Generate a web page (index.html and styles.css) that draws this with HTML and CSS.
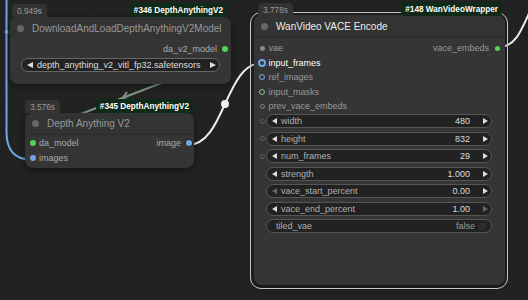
FILE: index.html
```html
<!DOCTYPE html>
<html lang="en">
<head>
  <meta charset="UTF-8">
  <title>Depth Anything / WanVideo VACE</title>
  <link rel="stylesheet" href="styles.css">
</head>
<body>
<div class="canvas">

  <!-- Links (drawn behind nodes) -->
  <svg class="links" width="528" height="300" viewBox="0 0 528 300">
    <path d="M6.5,0 L6.5,132 C6.5,150 14,159.5 31,159.5" class="link link-blue"/>
    <circle cx="6.5" cy="32" r="2" fill="#6fa7e6"/>
    <line x1="190" y1="72" x2="60" y2="122" class="link link-model"/>
    <polyline points="129.2,100.3 122.2,98.6 126.6,92.7" class="link link-model"/>
    <path d="M188,145 C225,145 225,63 262,63" class="link link-white"/>
    <circle cx="225" cy="104" r="4" fill="#eee"/>
    <path d="M499,47 C517,47 522,28 535,0" class="link link-white"/>
  </svg>

  <!-- #346 -->
  <div class="node node-load">
    <div class="badges">
      <span class="badge badge-time">0.949s</span>
      <span class="badge badge-id">#346 DepthAnythingV2</span>
    </div>
    <div class="node-title"><span class="title-dot"></span>DownloadAndLoadDepthAnythingV2Model</div>
    <div class="slot-row">
      <span></span>
      <span class="slot out">da_v2_model<i class="dot green"></i></span>
    </div>
    <div class="combo">
      <i class="arr-l"></i>
      <span class="combo-text">depth_anything_v2_vitl_fp32.safetensors</span>
      <i class="arr-r"></i>
    </div>
  </div>

  <!-- #345 -->
  <div class="node node-depth">
    <div class="badges">
      <span class="badge badge-time">3.576s</span>
      <span class="badge badge-id">#345 DepthAnythingV2</span>
    </div>
    <div class="node-title sep"><span class="title-dot"></span>Depth Anything V2</div>
    <div class="slot-row">
      <span class="slot in"><i class="dot green"></i>da_model</span>
      <span class="slot out">image<i class="dot blue"></i></span>
    </div>
    <div class="slot-row">
      <span class="slot in"><i class="dot blue"></i>images</span>
    </div>
  </div>

  <!-- #148 -->
  <div class="node node-vace">
    <div class="sel-outline"></div>
    <div class="badges">
      <span class="badge badge-time">3.778s</span>
      <span class="badge badge-id">#148 WanVideoWrapper</span>
    </div>
    <div class="node-title sep"><span class="title-dot"></span>WanVideo VACE Encode</div>
    <div class="slots">
      <div class="slot-row">
        <span class="slot in"><i class="dot grey"></i>vae</span>
        <span class="slot out">vace_embeds<i class="dot green small"></i></span>
      </div>
      <div class="slot-row">
        <span class="slot in active"><i class="dot ring big blue"></i>input_frames</span>
      </div>
      <div class="slot-row">
        <span class="slot in"><i class="dot ring blue"></i>ref_images</span>
      </div>
      <div class="slot-row">
        <span class="slot in"><i class="dot ring green"></i>input_masks</span>
      </div>
      <div class="slot-row">
        <span class="slot in"><i class="dot ring grey"></i>prev_vace_embeds</span>
      </div>
    </div>

    <div class="widgets">
      <div class="w-row">
        <i class="sock"></i>
        <div class="widget"><i class="arr-l"></i><span class="w-label">width</span><span class="w-value">480</span><i class="arr-r"></i></div>
      </div>
      <div class="w-row">
        <i class="sock"></i>
        <div class="widget"><i class="arr-l"></i><span class="w-label">height</span><span class="w-value">832</span><i class="arr-r"></i></div>
      </div>
      <div class="w-row">
        <i class="sock"></i>
        <div class="widget"><i class="arr-l"></i><span class="w-label">num_frames</span><span class="w-value">29</span><i class="arr-r"></i></div>
      </div>
      <div class="w-row">
        <i class="sock empty"></i>
        <div class="widget"><i class="arr-l"></i><span class="w-label">strength</span><span class="w-value">1.000</span><i class="arr-r"></i></div>
      </div>
      <div class="w-row">
        <i class="sock empty"></i>
        <div class="widget"><i class="arr-l dim"></i><span class="w-label">vace_start_percent</span><span class="w-value">0.00</span><i class="arr-r"></i></div>
      </div>
      <div class="w-row">
        <i class="sock empty"></i>
        <div class="widget"><i class="arr-l"></i><span class="w-label">vace_end_percent</span><span class="w-value">1.00</span><i class="arr-r dim"></i></div>
      </div>
      <div class="w-row">
        <i class="sock empty"></i>
        <div class="widget toggle"><span class="w-label">tiled_vae</span><span class="w-value off">false</span><i class="knob"></i></div>
      </div>
    </div>
  </div>

</div>
</body>
</html>
```

FILE: styles.css
```css
body {
  margin: 0;
  background: #222;
  font-family: "Liberation Sans", Arial, sans-serif;
  overflow: hidden;
}

.canvas {
  position: relative;
  width: 528px;
  height: 300px;
  background-color: #222;
  background-image:
    linear-gradient(90deg, rgba(0,0,0,0.1) 1px, transparent 1px),
    linear-gradient(rgba(0,0,0,0.1) 1px, transparent 1px);
  background-size: 72px 72px;
  background-position: 20px 34px;
  overflow: hidden;
}

.links {
  position: absolute;
  top: 0;
  left: 0;
}

.link {
  fill: none;
  stroke-width: 2;
  stroke-linecap: round;
  stroke-linejoin: round;
}
.link-blue { stroke: #6fa7e6; }
.link-model { stroke: #7e9680; }
.link-white { stroke: #eee; }

/* nodes */
.node {
  position: absolute;
  background: #353535;
  border-radius: 8px;
  box-shadow: 0 2px 6px rgba(0,0,0,0.45);
  display: flex;
  flex-direction: column;
  box-sizing: border-box;
}

.node-load  { left: 10px;  top: 17px;  width: 221px; height: 67px; }
.node-depth { left: 25px;  top: 113px; width: 169px; height: 55px; }
.node-vace  { left: 254px; top: 15px;  width: 251px; height: 270px; }

.node-title {
  height: 22px;
  flex-shrink: 0;
  display: flex;
  align-items: center;
  padding-left: 7px;
  background: #333;
  border-radius: 8px 8px 0 0;
  color: #999;
  font-size: 10px;
  white-space: nowrap;
}
.node-title.sep { border-bottom: 1px solid #2a2a2a; }
.node-depth .node-title { height: 21px; }
.node-vace .node-title { color: #eee; }

.title-dot {
  width: 7px;
  height: 7px;
  border-radius: 50%;
  background: #666;
  margin-right: 8px;
  flex-shrink: 0;
}

/* selection outline */
.sel-outline {
  position: absolute;
  top: -3px;
  left: -4px;
  right: -3px;
  bottom: -4px;
  border: 1px solid #c4c4c4;
  border-radius: 11px;
  pointer-events: none;
}

/* badges above the title */
.badges {
  position: absolute;
  left: 0;
  right: 0;
  bottom: 100%;
  display: flex;
  justify-content: space-between;
  align-items: flex-end;
  padding: 0 4px 0 2px;
  z-index: 2;
}
.node-depth .badges { padding: 0 1px 0 0; }
.node-vace .badges { padding: 0 3px 0 4px; bottom: calc(100% - 1px); }

.badge {
  height: 13px;
  display: flex;
  align-items: center;
  padding: 0 5px;
  font-size: 8.3px;
  white-space: nowrap;
}
.badge-time {
  background: #333;
  color: #999;
  border-radius: 4px 4px 0 0;
}
.badge-id {
  background: #0f2a19;
  color: #fff;
  font-weight: bold;
  font-size: 8.2px;
  padding: 0 4px;
  height: 14px;
  border-radius: 4px;
}

/* slots */
.slot-row {
  height: 15px;
  display: flex;
  justify-content: space-between;
  align-items: center;
  font-size: 9px;
  color: #aaa;
}
.node-load .slot-row { margin-top: 2.5px; }
.node-depth .slot-row { height: 15.5px; }
.node-depth .slot-row:first-of-type { margin-top: 1.5px; }

.slots { padding-top: 3px; }
.node-vace .slot-row { height: 14.5px; color: #999; }

.slot {
  display: flex;
  align-items: center;
  white-space: nowrap;
}
.slot.active { color: #fff; }

.dot {
  display: inline-block;
  width: 6px;
  height: 6px;
  border-radius: 50%;
  box-sizing: border-box;
  flex-shrink: 0;
}
.dot.green { background: #4fd65a; }
.dot.blue { background: #6fa7e6; }
.dot.grey { background: #888; width: 5px; height: 5px; }
.dot.small { width: 5px; height: 5px; }

.dot.ring { background: #3a3a3a; border: 1.5px solid; }
.dot.ring.blue { border-color: #6fa7e6; }
.dot.ring.green { border-color: #7cc47f; }
.dot.ring.grey { border-color: #888; }
.dot.ring.big { width: 8px; height: 8px; border-width: 2px; }

.slot.in .dot { margin: 0 3.5px 0 5px; }
.slot.in .dot.grey { margin: 0 4px 0 5.5px; }
.slot.in .dot.big { margin: 0 2.5px 0 4px; }
.node-depth .slot.in .dot { margin: 0 3.5px 0 4.5px; }

.slot.out .dot { margin: 0 3.5px 0 4.5px; }
.node-depth .slot.out .dot { margin: 0 2.5px 0 4.5px; box-shadow: 0 0 0 1px #2a2a2a; }
.node-vace .slot.out .dot { margin: 0 5px 0 6px; }

/* combo widget */
.combo {
  margin: 1.5px 0 0 11px;
  width: 199px;
  height: 14px;
  box-sizing: border-box;
  border: 1px solid #666;
  border-radius: 7px;
  background: #222;
  display: flex;
  align-items: center;
  padding: 0 3px 0 5px;
  color: #ddd;
  font-size: 9px;
}
.combo-text {
  flex: 1;
  margin-left: 4px;
  white-space: nowrap;
}
.combo .arr-l { border-right-width: 6px; border-top-width: 3.5px; border-bottom-width: 3.5px; }
.combo .arr-r { border-left-width: 6px; border-top-width: 3.5px; border-bottom-width: 3.5px; }

/* number widgets */
.widgets {
  display: flex;
  flex-direction: column;
  gap: 3.5px;
  margin-top: 0.5px;
}

.w-row {
  display: flex;
  align-items: center;
  padding-left: 5.5px;
}

.sock {
  width: 5px;
  height: 5px;
  border: 1px solid #56665a;
  border-radius: 50%;
  box-sizing: border-box;
  margin-right: 1.5px;
  flex-shrink: 0;
}
.sock.empty { border-color: transparent; }

.widget {
  width: 226px;
  height: 14px;
  box-sizing: border-box;
  border: 1px solid #555;
  border-radius: 7px;
  background: #222;
  display: flex;
  align-items: center;
  padding: 0 3px 0 5px;
  font-size: 9px;
}

.w-label {
  color: #b0b0b0;
  margin-left: 4px;
  flex: 1;
  white-space: nowrap;
}
.w-value {
  color: #ddd;
  margin-right: 13px;
}

.arr-l, .arr-r {
  width: 0;
  height: 0;
  border-top: 3px solid transparent;
  border-bottom: 3px solid transparent;
  flex-shrink: 0;
}
.arr-l { border-right: 5px solid #ddd; }
.arr-r { border-left: 5px solid #ddd; }
.arr-l.dim { border-right-color: #666; }
.arr-r.dim { border-left-color: #666; }

.widget.toggle { padding: 0 4px 0 9px; }
.widget.toggle .w-label { margin-left: 0; }
.w-value.off { color: #999; margin-right: 3px; }
.knob {
  width: 9px;
  height: 9px;
  border-radius: 50%;
  background: #2c2c2c;
  flex-shrink: 0;
}
```
